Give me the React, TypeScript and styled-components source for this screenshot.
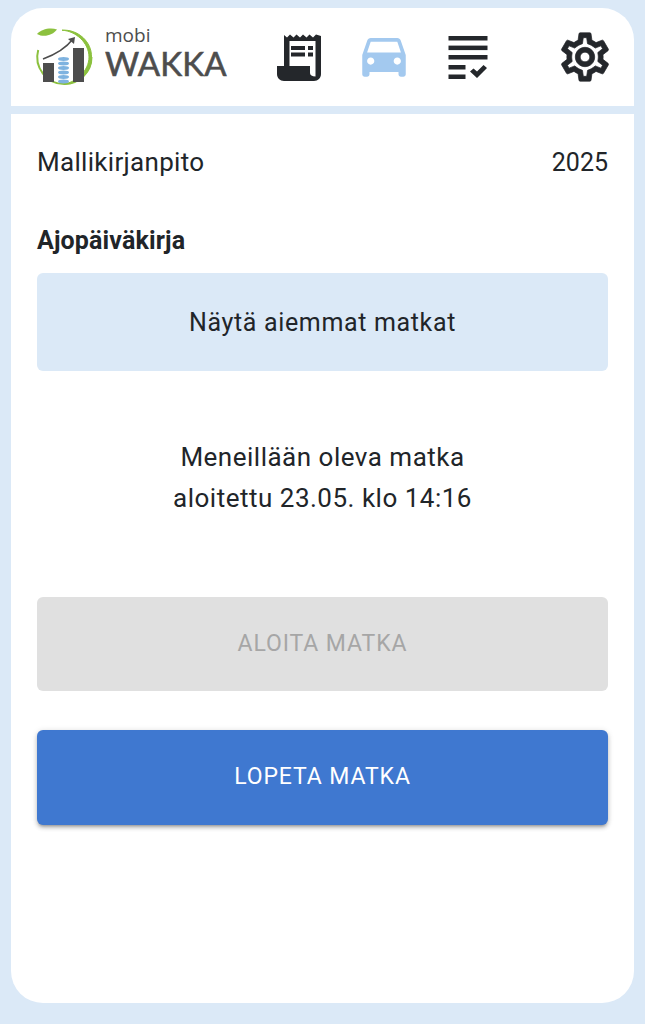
import React from "react"
import styled, { createGlobalStyle } from "styled-components"

const GlobalStyle = createGlobalStyle`
	html, body {
		margin: 0;
		padding: 0;
		background: #dbe9f7;
	}
`

const App: React.FC = () => {
	return (
		<Page>
			<GlobalStyle />
			<Frame>
				<Header>
					<LogoWrap>
						<LogoMark />
						<LogoText>
							<LogoSmall>mobi</LogoSmall>
							<LogoBig>WAKKA</LogoBig>
						</LogoText>
					</LogoWrap>
					<Nav>
						<ReceiptIcon />
						<CarIcon />
						<ListIcon />
					</Nav>
					<GearIcon />
				</Header>
				<Content>
					<InfoRow>
						<span>Mallikirjanpito</span>
						<Year>2025</Year>
					</InfoRow>
					<SectionTitle>Ajopäiväkirja</SectionTitle>
					<HistoryButton>Näytä aiemmat matkat</HistoryButton>
					<TripStatus>
						Meneillään oleva matka
						<br />
						aloitettu 23.05. klo 14:16
					</TripStatus>
					<ActionButton disabled>ALOITA MATKA</ActionButton>
					<ActionButton $primary>LOPETA MATKA</ActionButton>
				</Content>
			</Frame>
		</Page>
	)
}

export default App

const LogoMark: React.FC = () => (
	<LogoSvg viewBox="0 0 58 58">
		<path d="M2.2 22 A27 27 0 0 0 28.5 56 A27 27 0 0 0 55.5 29" fill="none" stroke="#8cc13f" strokeWidth="2" />
		<path d="M26 2.2 C42 1 56 14 55.5 29 C56 45 42 56 28.5 56 C40 54 53 43 53 29 C53 15 40 3 26 2.2 Z" fill="#8cc13f" stroke="#8cc13f" />
		<path d="M1 6 C5 1 15 -1 21 1.5 C17 7 8 10 1 6 Z" fill="#8cc13f" />
		<path d="M7 31 C18 27 30 20 37 11" fill="none" stroke="#4d4d4d" strokeWidth="1.5" />
		<path d="M32 11 L39 9 L38 16 Z" fill="#4d4d4d" />
		<rect x="7" y="35" width="11" height="19" fill="#4d4d4d" />
		<rect x="37" y="20" width="11" height="34" fill="#4d4d4d" />
		{[0, 1, 2, 3, 4, 5].map((i) => (
			<ellipse key={i} cx="27.5" cy={31 + i * 4.5} rx="5.5" ry="1.9" fill="#7fb3e0" />
		))}
	</LogoSvg>
)

const ReceiptIcon: React.FC = () => (
	<ReceiptSvg viewBox="0 0 44 48">
		<path
			fillRule="evenodd"
			d="M7 2 L10 4.5 L13 1.5 L16.5 4.5 L19.5 1.5 L23 4.5 L26 1.5 L29.5 4.5 L32.5 1.5 L36 4.5 L39 1.5 L44 3 V41 C44 45 41 48 37 48 H7 C3 48 0 45 0 41 V33 H7 Z M12.5 8 V33 H33 V40 C33 42 35 43.5 38.5 43.5 V8 Z"
			fill="#24272b"
		/>
		<rect x="14" y="13" width="14" height="4" fill="#24272b" />
		<rect x="31" y="13" width="5" height="4" fill="#24272b" />
		<rect x="14" y="19.5" width="14" height="4" fill="#24272b" />
		<rect x="31" y="19.5" width="5" height="4" fill="#24272b" />
	</ReceiptSvg>
)

const CarIcon: React.FC = () => (
	<CarSvg viewBox="0 0 24 24" fill="#a3c9ef">
		<path d="M18.92 6.01C18.72 5.42 18.16 5 17.5 5h-11c-.66 0-1.21.42-1.42 1.01L3 12v8c0 .55.45 1 1 1h1c.55 0 1-.45 1-1v-1h12v1c0 .55.45 1 1 1h1c.55 0 1-.45 1-1v-8l-2.08-5.99zM6.5 16c-.83 0-1.5-.67-1.5-1.5S5.67 13 6.5 13s1.5.67 1.5 1.5S7.33 16 6.5 16zm11 0c-.83 0-1.5-.67-1.5-1.5s.67-1.5 1.5-1.5 1.5.67 1.5 1.5-.67 1.5-1.5 1.5zM5 11l1.5-4.5h11L19 11H5z" />
	</CarSvg>
)

const ListIcon: React.FC = () => (
	<ListSvg viewBox="0 0 39 43" fill="#24272b">
		<rect x="0" y="0" width="39" height="4.5" />
		<rect x="0" y="9.6" width="39" height="4.5" />
		<rect x="0" y="19" width="39" height="4.5" />
		<rect x="0" y="29" width="17" height="4.5" />
		<rect x="0" y="38.5" width="17" height="4.5" />
		<path d="M21.5 35.5 L25 32.5 L28.5 35.5 L35 29 L38.5 32 L28.5 42 Z" />
	</ListSvg>
)

const GearIcon: React.FC = () => (
	<GearSvg viewBox="0 0 24 24" fill="#24272b" stroke="#24272b" strokeWidth="0.3">
		<path d="M19.43 12.98c.04-.32.07-.64.07-.98 0-.34-.03-.66-.07-.98l2.11-1.65c.19-.15.24-.42.12-.64l-2-3.46c-.09-.16-.26-.25-.44-.25-.06 0-.12.01-.17.03l-2.49 1c-.52-.4-1.08-.73-1.69-.98l-.38-2.65C14.46 2.18 14.25 2 14 2h-4c-.25 0-.46.18-.49.42l-.38 2.65c-.61.25-1.17.59-1.69.98l-2.49-1c-.06-.02-.12-.03-.18-.03-.17 0-.34.09-.43.25l-2 3.46c-.13.22-.07.49.12.64l2.11 1.65c-.04.32-.07.65-.07.98 0 .33.03.66.07.98l-2.11 1.65c-.19.15-.24.42-.12.64l2 3.46c.09.16.26.25.44.25.06 0 .12-.01.17-.03l2.49-1c.52.4 1.08.73 1.69.98l.38 2.65c.03.24.24.42.49.42h4c.25 0 .46-.18.49-.42l.38-2.65c.61-.25 1.17-.59 1.69-.98l2.49 1c.06.02.12.03.18.03.17 0 .34-.09.43-.25l2-3.46c.12-.22.07-.49-.12-.64l-2.11-1.65zm-1.98-1.71c.04.31.05.52.05.73 0 .21-.02.43-.05.73l-.14 1.13.89.7 1.08.84-.7 1.21-1.27-.51-1.04-.42-.9.68c-.43.32-.84.56-1.25.73l-1.06.43-.16 1.13-.2 1.35h-1.4l-.19-1.35-.16-1.13-1.06-.43c-.43-.18-.83-.41-1.23-.71l-.91-.7-1.06.43-1.27.51-.7-1.21 1.08-.84.89-.7-.14-1.13c-.03-.31-.05-.54-.05-.74s.02-.43.05-.73l.14-1.13-.89-.7-1.08-.84.7-1.21 1.27.51 1.04.42.9-.68c.43-.32.84-.56 1.25-.73l1.06-.43.16-1.13.2-1.35h1.39l.19 1.35.16 1.13 1.06.43c.43.18.83.41 1.23.71l.91.7 1.06-.43 1.27-.51.7 1.21-1.07.85-.89.7.14 1.13zM12 8c-2.21 0-4 1.79-4 4s1.79 4 4 4 4-1.79 4-4-1.79-4-4-4zm0 6c-1.1 0-2-.9-2-2s.9-2 2-2 2 .9 2 2-.9 2-2 2z" />
	</GearSvg>
)

const Page = styled.div`
	box-sizing: border-box;
	height: 1024px;
	padding: 8px 11px 21px;
	background: #dbe9f7;
	font-family: Roboto, "Liberation Sans", sans-serif;
	color: #212529;
	overflow: hidden;
`

const Frame = styled.div`
	display: flex;
	flex-direction: column;
	height: 100%;
	border-radius: 32px;
	overflow: hidden;
	background: #dbe9f7;
`

const Header = styled.header`
	display: flex;
	align-items: center;
	height: 98px;
	padding: 0 25px;
	background: #fff;
	flex-shrink: 0;
`

const LogoWrap = styled.div`
	display: flex;
	align-items: center;
	gap: 11px;
	width: 216px;
`

const LogoSvg = styled.svg`
	width: 58px;
	height: 58px;
	flex-shrink: 0;
	overflow: visible;
`

const LogoText = styled.div`
	display: flex;
	flex-direction: column;
	margin-top: -12px;
	color: #4d4d4d;
`

const LogoSmall = styled.span`
	font-family: "Open Sans", sans-serif;
	font-size: 19px;
	line-height: 23px;
`

const LogoBig = styled.span`
	font-family: Lato, sans-serif;
	font-size: 33px;
	line-height: 32px;
	letter-spacing: 0.1px;
	-webkit-text-stroke: 0.6px #4d4d4d;
`

const Nav = styled.nav`
	display: flex;
	align-items: center;
	gap: 41px;
	margin-left: 25px;
`

const ReceiptSvg = styled.svg`
	width: 44px;
	height: 48px;
`

const CarSvg = styled.svg`
	width: 58px;
	height: 58px;
	margin: -5px -6px 0 -7px;
`

const ListSvg = styled.svg`
	width: 40px;
	height: 43px;
	margin-top: 1px;
`

const GearSvg = styled.svg`
	width: 58px;
	height: 58px;
	margin-left: auto;
	margin-right: -5px;
`

const Content = styled.main`
	flex: 1;
	display: flex;
	flex-direction: column;
	margin-top: 8px;
	padding: 30px 26px 0;
	background: #fff;
`

const InfoRow = styled.div`
	display: flex;
	justify-content: space-between;
	align-items: baseline;
	font-size: 26px;
	line-height: 36px;
	letter-spacing: 0.3px;
`

const Year = styled.span`
	font-size: 25px;
	letter-spacing: 0;
`

const SectionTitle = styled.h2`
	margin: 42px 0 0;
	font-size: 25px;
	font-weight: 700;
	line-height: 36px;
	height: 36px;
	letter-spacing: 0.15px;
`

const HistoryButton = styled.button`
	height: 98px;
	margin-top: 14px;
	border: 0;
	border-radius: 6px;
	background: #dbe9f7;
	color: #212529;
	font: 400 25px Roboto, sans-serif;
	letter-spacing: 0.65px;
`

const TripStatus = styled.p`
	margin: 66px 0 0;
	height: 160px;
	font-size: 26px;
	line-height: 41px;
	letter-spacing: 0.5px;
	text-align: center;
`

const ActionButton = styled.button<{ $primary?: boolean }>`
	height: ${(p) => (p.$primary ? "95px" : "94px")};
	margin-bottom: 39px;
	padding: 0 0 2px;
	border: 0;
	border-radius: 6px;
	font: 400 23px Roboto, sans-serif;
	letter-spacing: 0.9px;
	background: ${(p) => (p.$primary ? "#3f78d0" : "#e0e0e0")};
	color: ${(p) => (p.$primary ? "#fff" : "#a6a6a6")};
	box-shadow: ${(p) =>
		p.$primary
			? "0 3px 3px -2px rgba(0,0,0,.25), 0 3px 4px rgba(0,0,0,.16), 0 1px 6px rgba(0,0,0,.14)"
			: "none"};
`
